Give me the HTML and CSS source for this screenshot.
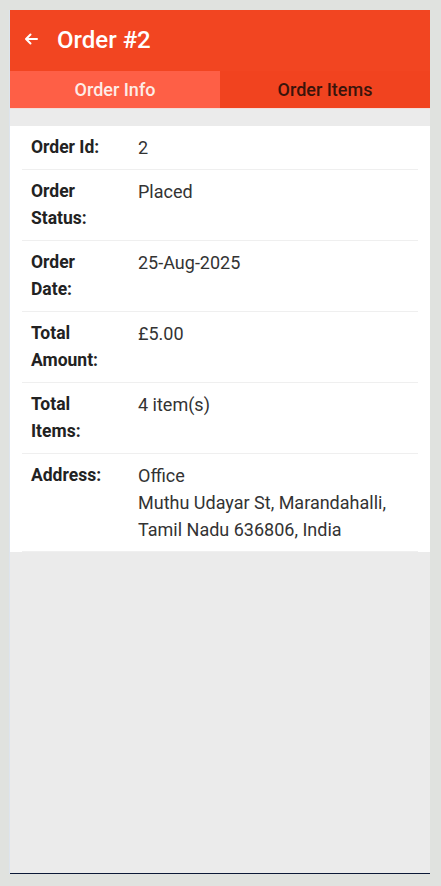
FILE: index.html
```html
<!DOCTYPE html>
<html>
<head>
<meta charset="utf-8">
<link rel="stylesheet" href="styles.css">
</head>
<body>
<div class="frame">
  <header class="appbar">
    <svg class="back" width="14" height="12" viewBox="0 0 14 12"><path d="M13 6H2.5M6.5 1.5L2 6l4.5 4.5" fill="none" stroke="#fff" stroke-width="2" stroke-linecap="round" stroke-linejoin="round"/></svg>
    <h1 class="title">Order #2</h1>
  </header>
  <nav class="tabs">
    <div class="tab active">Order Info</div>
    <div class="tab">Order Items</div>
  </nav>
  <div class="content">
    <div class="card">
      <div class="row"><div class="label">Order Id:</div><div class="value">2</div></div>
      <div class="row"><div class="label">Order<br>Status:</div><div class="value">Placed</div></div>
      <div class="row"><div class="label">Order<br>Date:</div><div class="value">25-Aug-2025</div></div>
      <div class="row"><div class="label">Total<br>Amount:</div><div class="value">£5.00</div></div>
      <div class="row"><div class="label">Total<br>Items:</div><div class="value">4 item(s)</div></div>
      <div class="row"><div class="label">Address:</div><div class="value">Office<br>Muthu Udayar St, Marandahalli,<br>Tamil Nadu 636806, India</div></div>
    </div>
  </div>
</div>
</body>
</html>
```
FILE: styles.css
```css
html, body {
  margin: 0;
  padding: 0;
  background: #e0e2df;
}
body {
  padding: 10px 11px 12px 10px;
  font-family: Roboto, "Liberation Sans", sans-serif;
}
.frame {
  width: 420px;
  height: 863px;
  background: #ebebeb;
  border-bottom: 1px solid #0b1836;
  display: flex;
  flex-direction: column;
  box-shadow: -1px 0 0 #dde4ee;
}
.appbar {
  height: 61px;
  background: #f24521;
  display: flex;
  align-items: center;
  padding-left: 14px;
}
.back {
  margin-top: -4px;
}
.title {
  margin: 0 0 0 19px;
  font-size: 24px;
  font-weight: 500;
  color: #fff;
  line-height: 1;
  margin-top: -2px;
}
.tabs {
  display: flex;
  height: 37px;
  box-shadow: inset 0 2px 2px -1px rgba(150, 30, 10, 0.25);
  border-bottom: 1px solid #f3ddd8;
}
.tab {
  flex: 1;
  display: flex;
  align-items: center;
  justify-content: center;
  font-size: 18px;
  font-weight: 500;
  background: #f1431f;
  color: #3a140b;
}
.tab.active {
  background: #fe5f46;
  color: #fdece7;
}
.content {
  padding-top: 17px;
}
.card {
  background: #fff;
  padding: 0 12px;
}
.row {
  display: flex;
  padding: 8px 9px;
  line-height: 27px;
  font-size: 17.5px;
  border-bottom: 1px solid #efefef;
}
.label {
  width: 107px;
  flex-shrink: 0;
  font-weight: 700;
  color: #222;
}
.value {
  font-size: 18px;
  color: #333;
}
```
